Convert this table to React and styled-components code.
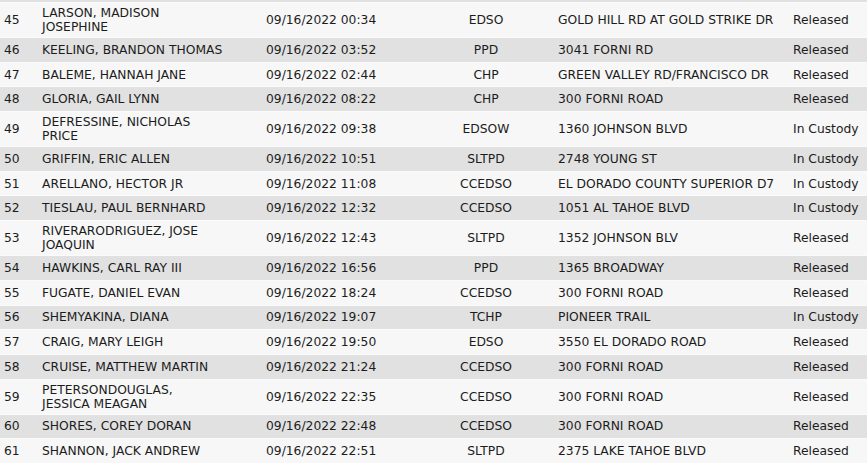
import React from "react";
import styled, { createGlobalStyle } from "styled-components";

const Global = createGlobalStyle`
  html, body { margin: 0; padding: 0; background: #f7f7f7; }
  body { font-family: "DejaVu Sans", Verdana, sans-serif; }
`;

const Wrap = styled.div`
  width: 867px;
  border-top: 2px solid #e1e1e1;
  overflow: hidden;
`;

const Table = styled.table`
  width: 867px;
  table-layout: fixed;
  border-collapse: separate;
  border-spacing: 0;
  font-family: "DejaVu Sans", Verdana, sans-serif;
  font-size: 12.3px;
  line-height: 14px;
  color: #1c1c1c;
`;

const Row = styled.tr`
  height: 24.7px;
  background: ${(p) => (p.$alt ? "#e1e1e1" : "#f7f7f7")};
`;

const Cell = styled.td`
  padding: 3px 4px;
  border-top: 1px solid #fbfbfb;
  vertical-align: middle;
  white-space: nowrap;
  text-align: ${(p) => (p.$center ? "center" : "left")};
`;

const cols = [38, 224, 156, 136, 235, 78];

const rows = [
  [45, ["LARSON, MADISON", "JOSEPHINE"], "09/16/2022 00:34", "EDSO", "GOLD HILL RD AT GOLD STRIKE DR", "Released"],
  [46, ["KEELING, BRANDON THOMAS"], "09/16/2022 03:52", "PPD", "3041 FORNI RD", "Released"],
  [47, ["BALEME, HANNAH JANE"], "09/16/2022 02:44", "CHP", "GREEN VALLEY RD/FRANCISCO DR", "Released"],
  [48, ["GLORIA, GAIL LYNN"], "09/16/2022 08:22", "CHP", "300 FORNI ROAD", "Released"],
  [49, ["DEFRESSINE, NICHOLAS", "PRICE"], "09/16/2022 09:38", "EDSOW", "1360 JOHNSON BLVD", "In Custody"],
  [50, ["GRIFFIN, ERIC ALLEN"], "09/16/2022 10:51", "SLTPD", "2748 YOUNG ST", "In Custody"],
  [51, ["ARELLANO, HECTOR JR"], "09/16/2022 11:08", "CCEDSO", "EL DORADO COUNTY SUPERIOR D7", "In Custody"],
  [52, ["TIESLAU, PAUL BERNHARD"], "09/16/2022 12:32", "CCEDSO", "1051 AL TAHOE BLVD", "In Custody"],
  [53, ["RIVERARODRIGUEZ, JOSE", "JOAQUIN"], "09/16/2022 12:43", "SLTPD", "1352 JOHNSON BLV", "Released"],
  [54, ["HAWKINS, CARL RAY III"], "09/16/2022 16:56", "PPD", "1365 BROADWAY", "Released"],
  [55, ["FUGATE, DANIEL EVAN"], "09/16/2022 18:24", "CCEDSO", "300 FORNI ROAD", "Released"],
  [56, ["SHEMYAKINA, DIANA"], "09/16/2022 19:07", "TCHP", "PIONEER TRAIL", "In Custody"],
  [57, ["CRAIG, MARY LEIGH"], "09/16/2022 19:50", "EDSO", "3550 EL DORADO ROAD", "Released"],
  [58, ["CRUISE, MATTHEW MARTIN"], "09/16/2022 21:24", "CCEDSO", "300 FORNI ROAD", "Released"],
  [59, ["PETERSONDOUGLAS,", "JESSICA MEAGAN"], "09/16/2022 22:35", "CCEDSO", "300 FORNI ROAD", "Released"],
  [60, ["SHORES, COREY DORAN"], "09/16/2022 22:48", "CCEDSO", "300 FORNI ROAD", "Released"],
  [61, ["SHANNON, JACK ANDREW"], "09/16/2022 22:51", "SLTPD", "2375 LAKE TAHOE BLVD", "Released"],
];

export default function App() {
  return (
    <>
      <Global />
      <Wrap>
        <Table>
          <colgroup>
            {cols.map((w, i) => (
              <col key={i} style={{ width: w }} />
            ))}
          </colgroup>
          <tbody>
            {rows.map(([n, name, date, agency, loc, status], i) => (
              <Row key={n} $alt={i % 2 === 1}>
                <Cell>{n}</Cell>
                <Cell>
                  {name.map((l, j) => (
                    <React.Fragment key={j}>
                      {j > 0 && <br />}
                      {l}
                    </React.Fragment>
                  ))}
                </Cell>
                <Cell>{date}</Cell>
                <Cell $center>{agency}</Cell>
                <Cell>{loc}</Cell>
                <Cell>{status}</Cell>
              </Row>
            ))}
          </tbody>
        </Table>
      </Wrap>
    </>
  );
}
